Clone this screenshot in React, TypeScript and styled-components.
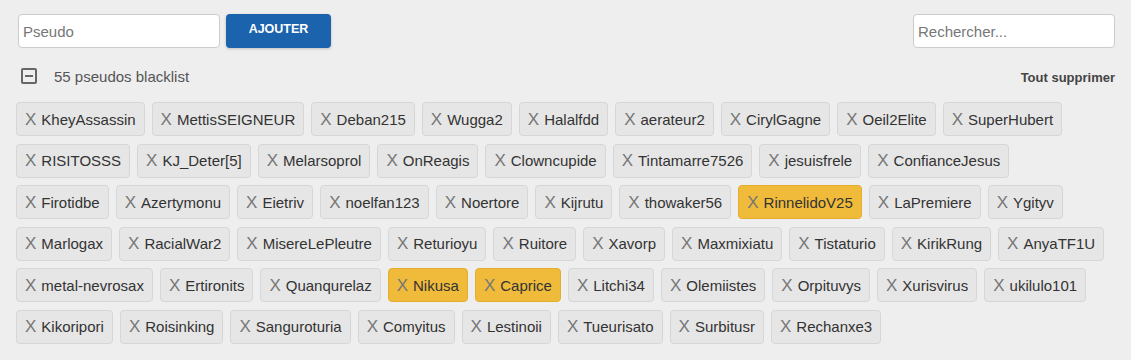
import React from "react";
import styled, { createGlobalStyle } from "styled-components";

const Global = createGlobalStyle`
  html, body { margin: 0; padding: 0; background: #eeeeee; }
  body { font-family: "Liberation Sans", Arial, sans-serif; }
  * { box-sizing: border-box; }
`;

const Page = styled.div`
  padding: 14px 16px 0 16px;
  width: 1131px;
`;

const TopBar = styled.div`
  display: flex;
  justify-content: space-between;
  align-items: center;
`;

const AddGroup = styled.div`
  display: flex;
  align-items: center;
  gap: 6px;
  padding-left: 2px;
`;

const TextInput = styled.input`
  width: 202px;
  height: 34px;
  border: 1px solid #cccccc;
  border-radius: 4px;
  background: #ffffff;
  padding: 0 4px;
  font-family: "Liberation Sans", Arial, sans-serif;
  font-size: 15px;
  color: #333;
  outline: none;
  &::placeholder { color: #777; }
`;

const AddButton = styled.button`
  width: 105px;
  height: 34px;
  border: none;
  border-radius: 4px;
  background: #1c63ad;
  color: #ffffff;
  font-family: "Liberation Sans", Arial, sans-serif;
  font-weight: bold;
  font-size: 12.5px;
  padding: 0 0 5px 0;
  box-shadow: 0 1px 3px rgba(0,0,0,0.2);
  cursor: pointer;
`;

const InfoBar = styled.div`
  display: flex;
  justify-content: space-between;
  align-items: center;
  height: 22px;
  margin-top: 17px;
  margin-bottom: 15px;
`;

const Count = styled.div`
  display: flex;
  align-items: center;
  gap: 17px;
  padding-left: 5px;
  font-size: 15px;
  color: #555;
`;

const Collapse = styled.span`
  width: 16px;
  height: 16px;
  border: 2px solid #666;
  border-radius: 2px;
  display: flex;
  align-items: center;
  justify-content: center;
  &::after {
    content: "";
    width: 8px;
    height: 2px;
    background: #666;
  }
`;

const ClearAll = styled.span`
  font-size: 13px;
  font-weight: bold;
  color: #444;
  padding-top: 2px;
`;

const Tags = styled.div`
  display: flex;
  flex-wrap: wrap;
`;

const Tag = styled.div<{ $hl?: boolean }>`
  display: flex;
  align-items: center;
  height: 34px;
  margin: 0 7px 7.5px 0;
  padding: 0 8px;
  border: 1px solid ${(p) => (p.$hl ? "#e4ad2f" : "#d6d6d6")};
  border-radius: 4px;
  background: ${(p) => (p.$hl ? "#f0bb3b" : "#e6e6e6")};
  font-size: 15px;
  color: #333;
  white-space: nowrap;
`;

const Remove = styled.span`
  font-size: 17px;
  color: #777;
  margin-right: 5px;
  line-height: 1;
`;

const names: [string, boolean?][] = [
  ["KheyAssassin"], ["MettisSEIGNEUR"], ["Deban215"], ["Wugga2"], ["Halalfdd"], ["aerateur2"], ["CirylGagne"], ["Oeil2Elite"], ["SuperHubert"],
  ["RISITOSSS"], ["KJ_Deter[5]"], ["Melarsoprol"], ["OnReagis"], ["Clowncupide"], ["Tintamarre7526"], ["jesuisfrele"], ["ConfianceJesus"],
  ["Firotidbe"], ["Azertymonu"], ["Eietriv"], ["noelfan123"], ["Noertore"], ["Kijrutu"], ["thowaker56"], ["RinnelidoV25", true], ["LaPremiere"], ["Ygityv"],
  ["Marlogax"], ["RacialWar2"], ["MisereLePleutre"], ["Returioyu"], ["Ruitore"], ["Xavorp"], ["Maxmixiatu"], ["Tistaturio"], ["KirikRung"], ["AnyaTF1U"],
  ["metal-nevrosax"], ["Ertironits"], ["Quanqurelaz"], ["Nikusa", true], ["Caprice", true], ["Litchi34"], ["Olemiistes"], ["Orpituvys"], ["Xurisvirus"], ["ukilulo101"],
  ["Kikoripori"], ["Roisinking"], ["Sanguroturia"], ["Comyitus"], ["Lestinoii"], ["Tueurisato"], ["Surbitusr"], ["Rechanxe3"],
];

export default function App() {
  return (
    <>
      <Global />
      <Page>
        <TopBar>
          <AddGroup>
            <TextInput placeholder="Pseudo" />
            <AddButton>AJOUTER</AddButton>
          </AddGroup>
          <TextInput placeholder="Rechercher..." />
        </TopBar>
        <InfoBar>
          <Count>
            <Collapse />
            <span>55 pseudos blacklist</span>
          </Count>
          <ClearAll>Tout supprimer</ClearAll>
        </InfoBar>
        <Tags>
          {names.map(([n, hl]) => (
            <Tag key={n} $hl={hl}>
              <Remove>X</Remove>
              {n}
            </Tag>
          ))}
        </Tags>
      </Page>
    </>
  );
}
